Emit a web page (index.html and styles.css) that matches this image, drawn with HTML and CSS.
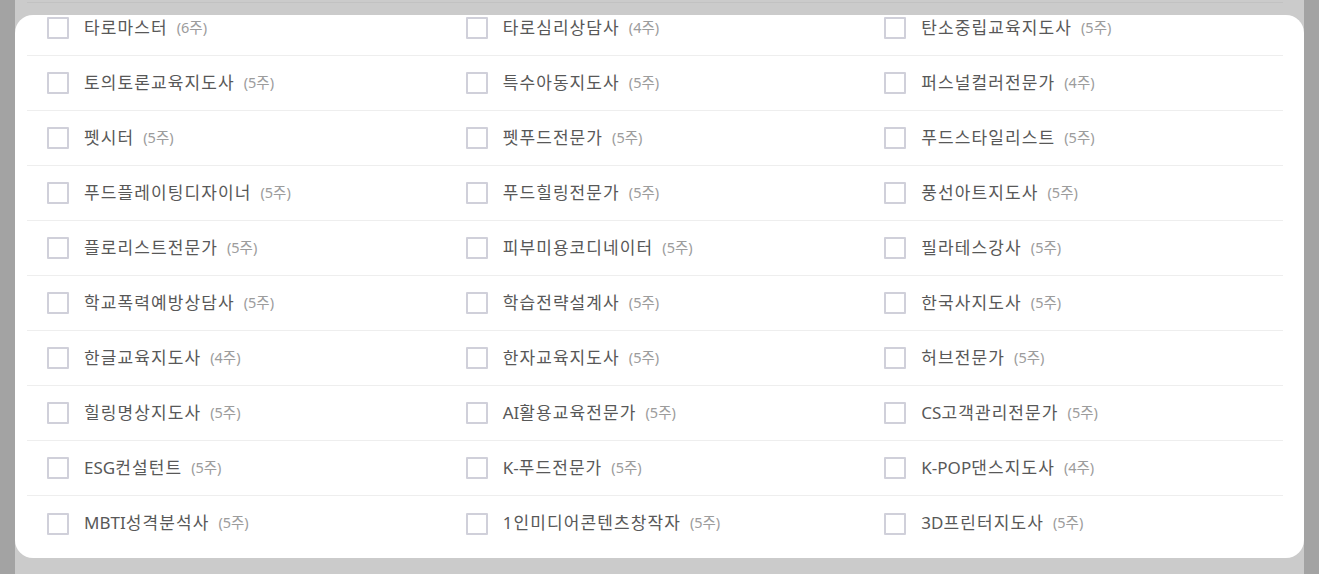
FILE: index.html
```html
<!DOCTYPE html>
<html lang="ko">
<head>
<meta charset="utf-8">
<title>과정 선택</title>
<link rel="stylesheet" href="styles.css">
</head>
<body>
<div class="screen">
  <div class="side"></div>
  <div class="main">
    <div class="top-band"><div class="ghost-line"></div></div>
    <div class="card">
      <ul class="list">
        <li class="item"><span class="box"></span><span class="name">타로마스터</span><span class="weeks">(6주)</span></li>
        <li class="item"><span class="box"></span><span class="name">타로심리상담사</span><span class="weeks">(4주)</span></li>
        <li class="item"><span class="box"></span><span class="name">탄소중립교육지도사</span><span class="weeks">(5주)</span></li>
        <li class="item"><span class="box"></span><span class="name">토의토론교육지도사</span><span class="weeks">(5주)</span></li>
        <li class="item"><span class="box"></span><span class="name">특수아동지도사</span><span class="weeks">(5주)</span></li>
        <li class="item"><span class="box"></span><span class="name">퍼스널컬러전문가</span><span class="weeks">(4주)</span></li>
        <li class="item"><span class="box"></span><span class="name">펫시터</span><span class="weeks">(5주)</span></li>
        <li class="item"><span class="box"></span><span class="name">펫푸드전문가</span><span class="weeks">(5주)</span></li>
        <li class="item"><span class="box"></span><span class="name">푸드스타일리스트</span><span class="weeks">(5주)</span></li>
        <li class="item"><span class="box"></span><span class="name">푸드플레이팅디자이너</span><span class="weeks">(5주)</span></li>
        <li class="item"><span class="box"></span><span class="name">푸드힐링전문가</span><span class="weeks">(5주)</span></li>
        <li class="item"><span class="box"></span><span class="name">풍선아트지도사</span><span class="weeks">(5주)</span></li>
        <li class="item"><span class="box"></span><span class="name">플로리스트전문가</span><span class="weeks">(5주)</span></li>
        <li class="item"><span class="box"></span><span class="name">피부미용코디네이터</span><span class="weeks">(5주)</span></li>
        <li class="item"><span class="box"></span><span class="name">필라테스강사</span><span class="weeks">(5주)</span></li>
        <li class="item"><span class="box"></span><span class="name">학교폭력예방상담사</span><span class="weeks">(5주)</span></li>
        <li class="item"><span class="box"></span><span class="name">학습전략설계사</span><span class="weeks">(5주)</span></li>
        <li class="item"><span class="box"></span><span class="name">한국사지도사</span><span class="weeks">(5주)</span></li>
        <li class="item"><span class="box"></span><span class="name">한글교육지도사</span><span class="weeks">(4주)</span></li>
        <li class="item"><span class="box"></span><span class="name">한자교육지도사</span><span class="weeks">(5주)</span></li>
        <li class="item"><span class="box"></span><span class="name">허브전문가</span><span class="weeks">(5주)</span></li>
        <li class="item"><span class="box"></span><span class="name">힐링명상지도사</span><span class="weeks">(5주)</span></li>
        <li class="item"><span class="box"></span><span class="name"><span class="latin">AI</span>활용교육전문가</span><span class="weeks">(5주)</span></li>
        <li class="item"><span class="box"></span><span class="name"><span class="latin">CS</span>고객관리전문가</span><span class="weeks">(5주)</span></li>
        <li class="item"><span class="box"></span><span class="name"><span class="latin">ESG</span>컨설턴트</span><span class="weeks">(5주)</span></li>
        <li class="item"><span class="box"></span><span class="name"><span class="latin">K-</span>푸드전문가</span><span class="weeks">(5주)</span></li>
        <li class="item"><span class="box"></span><span class="name"><span class="latin">K-POP</span>댄스지도사</span><span class="weeks">(4주)</span></li>
        <li class="item last"><span class="box"></span><span class="name"><span class="latin">MBTI</span>성격분석사</span><span class="weeks">(5주)</span></li>
        <li class="item last"><span class="box"></span><span class="name">1인미디어콘텐츠창작자</span><span class="weeks">(5주)</span></li>
        <li class="item last"><span class="box"></span><span class="name"><span class="latin">3D</span>프린터지도사</span><span class="weeks">(5주)</span></li>
      </ul>
    </div>
    <div class="bottom-band"></div>
  </div>
  <div class="side"></div>
</div>
</body>
</html>
```

FILE: styles.css
```css
* { box-sizing: border-box; }

html, body {
  margin: 0;
  padding: 0;
}

body {
  background: #cbcbcb;
  font-family: "Noto Sans", "Noto Sans CJK KR", sans-serif;
  overflow: hidden;
}

.screen {
  display: flex;
  height: 574px;
}

.side {
  width: 15px;
  flex: 0 0 15px;
  background: #a3a3a3;
}

.main {
  flex: 1;
  display: flex;
  flex-direction: column;
  min-width: 0;
}

.top-band {
  height: 15px;
  flex: 0 0 15px;
  padding: 2px 21px 0 12px;
}

.ghost-line {
  height: 1px;
  background: #c2c2c2;
}

.card {
  flex: 1;
  background: #ffffff;
  border-radius: 18px;
  overflow: hidden;
  padding: 0 21px 0 12px;
}

.bottom-band {
  height: 16px;
  flex: 0 0 16px;
}

.list {
  list-style: none;
  margin: -14px 0 0 0;
  padding: 0;
  display: grid;
  grid-template-columns: repeat(3, 1fr);
}

.item {
  height: 55px;
  display: flex;
  align-items: center;
  padding-left: 20px;
  border-bottom: 1px solid #eeeeee;
}

.item.last {
  border-bottom: none;
}

.box {
  width: 22px;
  height: 22px;
  flex: 0 0 22px;
  border: 2px solid #d0d0da;
  border-radius: 1px;
  background: #ffffff;
  margin-right: 15px;
}

.name {
  font-size: 17px;
  color: #585858;
  letter-spacing: 1.1px;
  margin-bottom: 4px;
}

.latin {
  letter-spacing: 0;
}

.weeks {
  font-size: 14.5px;
  color: #9c9c9c;
  margin-left: 9px;
  margin-bottom: 4px;
}
```
